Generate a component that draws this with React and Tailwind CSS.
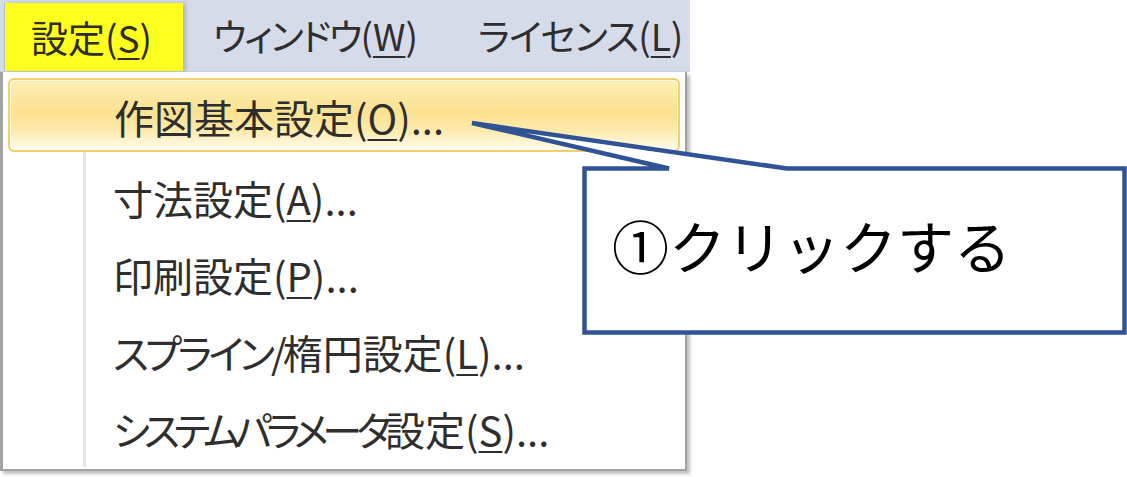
import React from 'react';

const menuFont = { fontFamily: '"Noto Sans CJK JP", "Noto Sans", sans-serif' };

const items = [
  { label: '寸法設定', key: 'A', kana: 'tracking-[-4px]' },
  { label: '印刷設定', key: 'P', kana: 'tracking-[-4px]' },
  { label: 'スプライン/楕円設定', key: 'L', kana: 'tracking-[-4px]' },
  { label: 'システムパラメータ設定', key: 'S', kana: 'tracking-[-6px]' },
];

// katakana runs are set tighter, like Meiryo UI
function splitKana(text) {
  return text.split(/([\u30a0-\u30ff/]+)/).filter(Boolean);
}

function Label({ label, k, dots, kana = 'tracking-[-3px]' }) {
  return (
    <span className="whitespace-nowrap">
      {splitKana(label).map((part, i) =>
        /[\u30a0-\u30ff]/.test(part) ? (
          <span key={i} className={kana}>{part}</span>
        ) : (
          <span key={i}>{part}</span>
        )
      )}
      (<span className="underline decoration-2 underline-offset-[5px]">{k}</span>){dots ? '...' : ''}
    </span>
  );
}

export default function App() {
  return (
    <div
      className="relative w-[1127px] h-[477px] bg-white overflow-hidden text-[#2e2e2e] [font-feature-settings:'palt']"
      style={menuFont}
    >
      <div className="w-[690px] h-full flex flex-col">
        {/* menu bar */}
        <div className="h-[72px] bg-[#d6dbe9] border-b border-[#c9cedc] flex items-stretch text-[37px] leading-none">
          <div className="ml-[4px] mt-[3px] w-[179px] bg-[#ffff1e] border-l border-[#b8bcc8] shadow-[3px_0_4px_rgba(0,0,0,0.18)] flex items-center pl-[26px]">
            <Label label="設定" k="S" />
          </div>
          <div className="flex items-center pl-[30px] w-[295px]">
            <Label label="ウィンドウ" k="W" kana="tracking-[-2px]" />
          </div>
          <div className="flex items-center">
            <Label label="ライセンス" k="L" kana="tracking-[-1px]" />
          </div>
        </div>

        {/* dropdown */}
        <div className="flex-1 flex">
          <div className="relative flex-1 flex flex-col bg-white border-l-[3px] border-r-[2px] border-b-[2px] border-[#a3a3a3] shadow-[3px_3px_3px_rgba(0,0,0,0.25)] mb-[6px] mr-[3px] text-[40px] leading-none">
            <div className="absolute left-[80px] top-[80px] bottom-[2px] w-[3px] bg-[#e3e5ea]" />
            <div className="mx-[5px] mt-[6px] h-[74px] rounded-[6px] border-2 border-[#f2d06c] bg-[linear-gradient(to_bottom,#fdeeb6_0%,#fbe291_45%,#fce9a9_70%,#fffcee_100%)] shadow-[inset_0_0_0_1px_rgba(255,255,255,0.7)] flex items-center pl-[104px] pt-[4px]">
              <Label label="作図基本設定" k="O" dots />
            </div>
            <div className="relative flex flex-col mt-[7px]">
              {items.map((it) => (
                <div key={it.label} className="h-[77px] flex items-center pl-[110px]">
                  <Label label={it.label} k={it.key} dots kana={it.kana} />
                </div>
              ))}
            </div>
          </div>
        </div>
      </div>

      {/* callout */}
      <div className="absolute inset-0 pointer-events-none">
        <svg width="1127" height="477" className="absolute inset-0">
          <polygon
            points="584.5,168.5 669,168.5 472,123 787,168.5 1124.5,168.5 1124.5,332.5 584.5,332.5"
            fill="#ffffff"
            stroke="#2f5394"
            strokeWidth="4.5"
            strokeLinejoin="miter"
          />
        </svg>
        <div className="absolute left-[612px] top-[216px] text-[57px] leading-none text-black [font-feature-settings:normal] whitespace-nowrap">
          ①クリックする
        </div>
      </div>
    </div>
  );
}
